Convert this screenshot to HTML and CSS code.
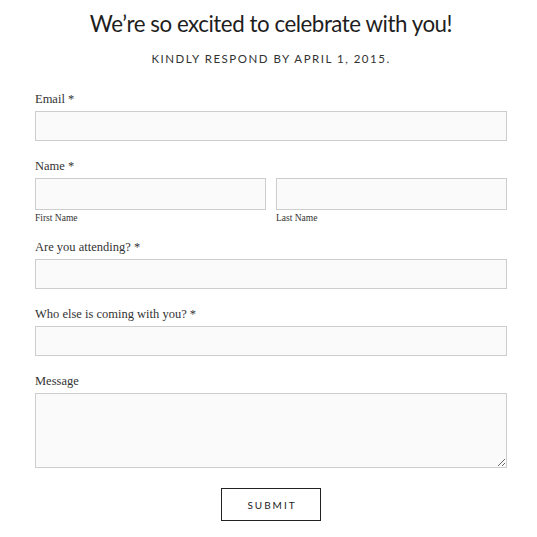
FILE: index.html
```html
<!DOCTYPE html>
<html>
<head>
<meta charset="utf-8">
<link rel="stylesheet" href="styles.css">
</head>
<body>
<div class="page">
  <h1 class="title">We’re so excited to celebrate with you!</h1>
  <p class="subtitle">KINDLY RESPOND BY APRIL 1, 2015.</p>
  <form class="form">
    <div class="field">
      <label class="label">Email *</label>
      <input class="input" type="text">
    </div>
    <div class="field field-name">
      <label class="label">Name *</label>
      <div class="name-row">
        <div class="name-col">
          <input class="input" type="text">
          <span class="sublabel">First Name</span>
        </div>
        <div class="name-col">
          <input class="input" type="text">
          <span class="sublabel">Last Name</span>
        </div>
      </div>
    </div>
    <div class="field">
      <label class="label">Are you attending? *</label>
      <input class="input" type="text">
    </div>
    <div class="field">
      <label class="label">Who else is coming with you? *</label>
      <input class="input" type="text">
    </div>
    <div class="field">
      <label class="label">Message</label>
      <textarea class="textarea"></textarea>
    </div>
    <div class="actions">
      <button class="submit" type="button">SUBMIT</button>
    </div>
  </form>
</div>
</body>
</html>
```

FILE: styles.css
```css
* { box-sizing: border-box; }
html, body { margin: 0; padding: 0; background: #fff; }
body { color: #222; }
.page {
  width: 472px;
  margin-left: 35px;
  padding-top: 8px;
}
.title {
  margin: 0;
  font-family: "Lato", sans-serif;
  font-weight: 400;
  font-size: 22.3px;
  letter-spacing: -0.45px;
  line-height: 32px;
  text-align: center;
  color: #1e1e1e;
}
.subtitle {
  margin: 11px 0 0;
  font-family: "Lato", sans-serif;
  font-size: 11.5px;
  letter-spacing: 1.5px;
  line-height: 16px;
  text-align: center;
  color: #333;
}
.form { margin-top: 24px; display: flex; flex-direction: column; }
.field { display: flex; flex-direction: column; margin-bottom: 17px; }
.field-name { margin-bottom: 15px; }
.label {
  font-family: "Liberation Serif", serif;
  font-size: 12.5px;
  line-height: 16px;
  color: #333;
  margin-bottom: 4px;
}
.input {
  display: block;
  width: 100%;
  height: 30px;
  border: 1px solid #cdcdcd;
  background: #fafafa;
  margin: 0;
}
.name-row { display: flex; gap: 10px; }
.name-col { flex: 1; display: flex; flex-direction: column; }
.name-col .input { height: 32px; }
.sublabel {
  font-family: "Liberation Serif", serif;
  font-size: 9.5px;
  line-height: 11px;
  margin-top: 3px;
  color: #333;
}
.textarea {
  display: block;
  width: 100%;
  height: 75px;
  border: 1px solid #cdcdcd;
  background: #fafafa;
  margin: 0;
  resize: vertical;
}
.actions { display: flex; justify-content: center; margin-top: 3px; }
.submit {
  width: 100px;
  height: 33px;
  border: 1px solid #222;
  background: #fff;
  font-family: "Lato", sans-serif;
  font-size: 10px;
  letter-spacing: 2px;
  color: #222;
  padding: 0 0 0 2px;
}
```
